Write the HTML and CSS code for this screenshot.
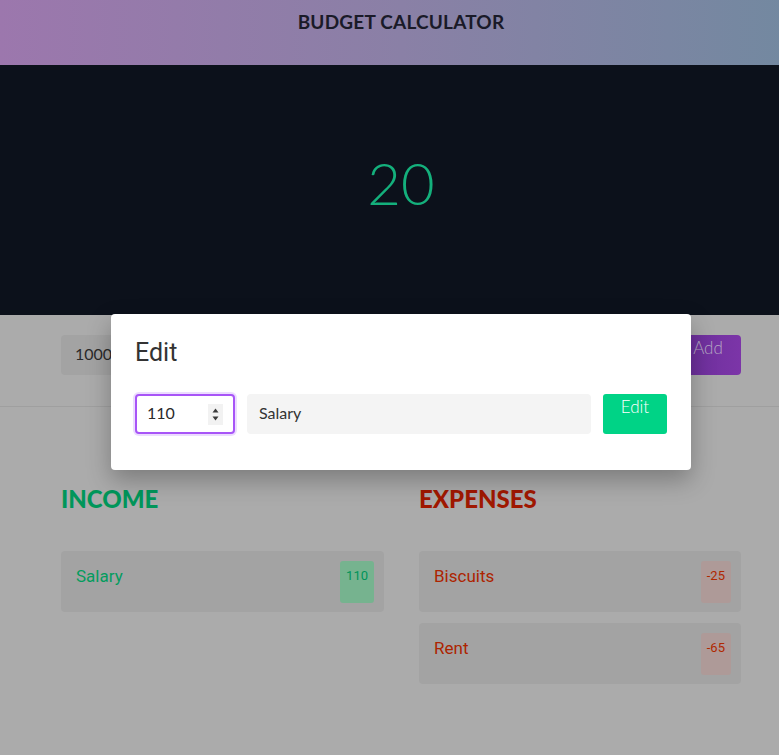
FILE: index.html
```html
<!DOCTYPE html>
<html lang="en">
<head>
<meta charset="utf-8">
<title>Budget Calculator</title>
<link rel="stylesheet" href="styles.css">
</head>
<body>
<header class="topbar">
  <h1 class="topbar-title">BUDGET CALCULATOR</h1>
</header>
<section class="balance">
  <div class="balance-value">20</div>
</section>
<main class="content">
  <div class="add-row">
    <div class="field field-amount">1000</div>
    <div class="field field-name"></div>
    <div class="btn btn-add">Add</div>
  </div>
  <div class="lists">
    <div class="list">
      <h2 class="list-title income">INCOME</h2>
      <div class="item">
        <span class="item-name income-text">Salary</span>
        <span class="badge badge-income">110</span>
      </div>
    </div>
    <div class="list">
      <h2 class="list-title expense">EXPENSES</h2>
      <div class="item">
        <span class="item-name expense-text">Biscuits</span>
        <span class="badge badge-expense">-25</span>
      </div>
      <div class="item">
        <span class="item-name expense-text">Rent</span>
        <span class="badge badge-expense">-65</span>
      </div>
    </div>
  </div>
</main>
<div class="modal">
  <h3 class="modal-title">Edit</h3>
  <div class="modal-row">
    <div class="num-box">
      <span class="num-value">110</span>
      <span class="spinner">
        <svg width="15" height="21" viewBox="0 0 15 21"><path d="M7.5 4.5 L10.5 8.5 L4.5 8.5 Z" fill="#3a3a3a"/><path d="M7.5 16.5 L10.5 12.5 L4.5 12.5 Z" fill="#3a3a3a"/></svg>
      </span>
    </div>
    <div class="text-box">Salary</div>
    <div class="btn btn-edit">Edit</div>
  </div>
</div>
</body>
</html>
```
FILE: styles.css
```css
* { box-sizing: border-box; }
html { overflow: hidden; }
html, body { margin: 0; padding: 0; }
body {
  width: 802px;
  min-height: 755px;
  background: #ababab;
  font-family: "Lato", "Noto Sans", sans-serif;
  position: relative;
}
.topbar {
  height: 65px;
  background: linear-gradient(90deg, #9c77ad 0%, #8a80a6 50%, #7289a0 100%);
  display: flex;
  justify-content: center;
  padding-top: 11px;
}
.topbar-title {
  margin: 0;
  font-family: "Lato", sans-serif;
  font-weight: 700;
  font-size: 19px;
  line-height: 22px;
  color: #1a1a28;
  letter-spacing: 0.2px;
}
.balance {
  height: 250px;
  background: #0c111b;
  display: flex;
  justify-content: center;
  align-items: center;
  padding-bottom: 14px;
}
.balance-value {
  font-family: "Lato", sans-serif;
  font-weight: 300;
  font-size: 58px;
  color: #14b07c;
  line-height: 1;
}
.content {
  background: #ababab;
  min-height: 440px;
}
.add-row {
  display: flex;
  gap: 12px;
  padding: 20px 61px 31px 61px;
  border-bottom: 1px solid #9f9f9f;
}
.field {
  height: 40px;
  background: #a3a3a3;
  border-radius: 4px;
  font-size: 16px;
  color: #2a2a2a;
  display: flex;
  align-items: center;
  padding: 0 0 3px 14px;
}
.field-amount { width: 100px; }
.field-name { flex: 1; }
.btn {
  height: 40px;
  border-radius: 4px;
  font-family: "Lato", sans-serif;
  font-weight: 300;
  font-size: 17px;
  line-height: 20px;
  padding-top: 3px;
  text-align: center;
}
.btn-add {
  width: 66px;
  background: linear-gradient(90deg, #682e98, #7c35a8);
  color: #b5a6c4;
}
.lists {
  display: grid;
  grid-template-columns: 323px 322px;
  column-gap: 35px;
  padding: 77px 0 0 61px;
}
.list-title {
  margin: 0 0 38px;
  font-family: "Lato", sans-serif;
  font-weight: 900;
  font-size: 24px;
  line-height: 29px;
}
.income { color: #00965a; }
.expense { color: #a01800; }
.item {
  height: 61px;
  background: #a3a3a3;
  border-radius: 4px;
  display: flex;
  justify-content: space-between;
  align-items: flex-start;
  padding: 10px 10px 9px 15px;
  margin-bottom: 11px;
}
.item-name {
  font-family: "Roboto", sans-serif;
  font-size: 17px;
  line-height: 20px;
  margin-top: 5px;
}
.income-text { color: #039c5e; }
.expense-text { color: #ad2400; }
.badge {
  height: 42px;
  padding: 7px 6px 0;
  border-radius: 3px;
  font-family: "Roboto", sans-serif;
  font-size: 13px;
  line-height: 16px;
  font-weight: 400;
}
.badge-income { background: #76b38f; color: #00935a; }
.badge-expense { background: #ae9a98; color: #b02800; }
.modal {
  position: absolute;
  left: 111px;
  top: 314px;
  width: 580px;
  height: 156px;
  background: #ffffff;
  border-radius: 4px;
  padding: 24px 24px 36px 24px;
  box-shadow: 0 10px 24px rgba(0, 0, 0, 0.28);
}
.modal-title {
  margin: 0 0 27px;
  font-family: "Roboto", sans-serif;
  font-weight: 400;
  font-size: 25px;
  line-height: 29px;
  color: #333333;
}
.modal-row {
  display: flex;
  gap: 12px;
  height: 40px;
}
.num-box {
  width: 100px;
  height: 40px;
  border: 2px solid #a855f7;
  border-radius: 4px;
  box-shadow: 0 0 0 2px #ecdcff;
  display: flex;
  align-items: center;
  justify-content: space-between;
  padding: 0 10px 0 10px;
  background: #ffffff;
}
.num-value {
  font-size: 16px;
  color: #2a2a2a;
  padding-bottom: 3px;
}
.spinner {
  display: flex;
  background: #f2f2f2;
  width: 15px;
  height: 21px;
}
.text-box {
  flex: 1;
  height: 40px;
  background: #f4f4f4;
  border-radius: 4px;
  display: flex;
  align-items: center;
  padding: 0 0 3px 12px;
  font-size: 16px;
  color: #333333;
}
.btn-edit {
  width: 64px;
  background: #00d386;
  color: #ffffff;
  border-radius: 3px;
}
```
